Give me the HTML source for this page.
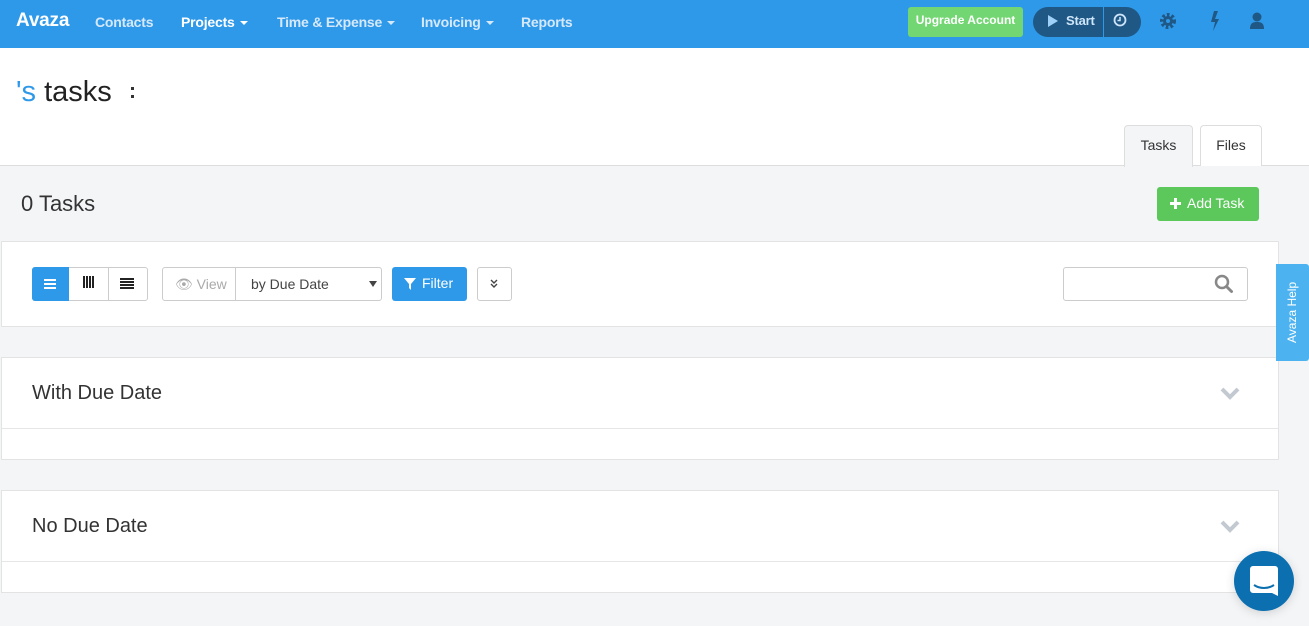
<!DOCTYPE html>
<html><head><meta charset="utf-8"><style>
*{box-sizing:border-box;margin:0;padding:0}
body{width:1309px;height:626px;overflow:hidden;background:#f4f5f7;font-family:"Liberation Sans",Arial,sans-serif;position:relative;color:#333}
.nav{position:absolute;left:0;top:0;width:1309px;height:48px;background:#2f99e9}
.nav span{position:absolute;top:14px;font-size:14px;font-weight:bold;color:#d6e9fb;letter-spacing:-0.2px}
.car{display:inline-block;border-left:4px solid transparent;border-right:4px solid transparent;border-top:4px solid currentColor;vertical-align:middle;margin-left:5px}
.white{position:absolute;left:0;top:48px;width:1309px;height:118px;background:#fff;border-bottom:1px solid #ddd}
.abs{position:absolute}
.panel{position:absolute;left:1px;width:1278px;background:#fff;border:1px solid #e3e3e3}
.btn{position:absolute;border:1px solid #ccc;border-radius:3px;background:#fff}
</style></head><body>
<div class="nav">
<span style="left:16px;top:10px;font-size:19px;color:#fff">Avaza</span>
<span style="left:95px">Contacts</span>
<span style="left:181px;color:#fff">Projects<i class="car"></i></span>
<span style="left:277px">Time &amp; Expense<i class="car"></i></span>
<span style="left:421px">Invoicing<i class="car"></i></span>
<span style="left:521px">Reports</span>
<div class="abs" style="left:908px;top:7px;width:115px;height:30px;background:#72d672;border-radius:3px;color:#fff;font-size:12px;font-weight:bold;text-align:center;line-height:26px">Upgrade Account</div>
<div class="abs" style="left:1033px;top:7px;width:108px;height:30px;background:#1f5785;border-radius:15px"></div>
<div class="abs" style="left:1103px;top:7px;width:1px;height:30px;background:#2f99e9"></div>
<div class="abs" style="left:1048px;top:15px;width:0;height:0;border-left:10px solid #9fd0f7;border-top:6px solid transparent;border-bottom:6px solid transparent"></div>
<span style="left:1066px;top:13px;font-size:13px;color:#cfe6fa">Start</span>
<svg class="abs" style="left:1113px;top:13px" width="14" height="14" viewBox="0 0 14 14"><circle cx="7" cy="7" r="5.5" fill="none" stroke="#cfe6fa" stroke-width="1.8"/><path d="M7 4v3.5h-2.5" fill="none" stroke="#cfe6fa" stroke-width="1.5"/></svg>
<svg class="abs" style="left:1159px;top:12px" width="18" height="18" viewBox="0 0 18 18"><circle cx="9" cy="9" r="6" fill="none" stroke="#1f5785" stroke-width="4" stroke-dasharray="2.5 2"/><circle cx="9" cy="9" r="5" fill="#1f5785"/><circle cx="9" cy="9" r="2" fill="#2f99e9"/></svg>
<svg class="abs" style="left:1208px;top:10px" width="14" height="22" viewBox="0 0 14 22"><path d="M6 1h4L7 9h4L5 21l2-9H3z" fill="#1f5785"/></svg>
<svg class="abs" style="left:1249px;top:12px" width="16" height="18" viewBox="0 0 16 18"><circle cx="8" cy="5" r="4.5" fill="#1f5785"/><path d="M1 17c0-6 3-7 7-7s7 1 7 7z" fill="#1f5785"/></svg>
</div>
<div class="white"></div>
<div class="abs" style="left:16px;top:76px;font-size:29px;color:#222"><span style="color:#2f99e9">'s</span> tasks</div>
<div class="abs" style="left:131px;top:87px;width:3px;height:11px;border-left:3px dotted #333"></div>
<div class="abs" style="left:1124px;top:125px;width:69px;height:42px;background:#f4f5f7;border:1px solid #ddd;border-bottom:none;border-radius:4px 4px 0 0;font-size:14px;text-align:center;line-height:38px">Tasks</div>
<div class="abs" style="left:1200px;top:125px;width:62px;height:41px;background:#fff;border:1px solid #ddd;border-bottom:none;border-radius:4px 4px 0 0;font-size:14px;text-align:center;line-height:38px">Files</div>
<div class="abs" style="left:21px;top:191px;font-size:22px;color:#333">0 Tasks</div>
<div class="abs" style="left:1157px;top:187px;width:102px;height:34px;background:#5cc85c;border-radius:3px;color:#fff;font-size:14px;line-height:33px;padding-left:30px">Add Task</div>
<div class="abs" style="left:1170px;top:202px;width:11px;height:3px;background:#fff"></div><div class="abs" style="left:1174px;top:198px;width:3px;height:11px;background:#fff"></div>
<div class="panel" style="top:241px;height:86px"></div>
<div class="btn" style="left:32px;top:267px;width:116px;height:34px"></div>
<div class="abs" style="left:32px;top:267px;width:37px;height:34px;background:#2f99e9;border-radius:3px 0 0 3px"></div>
<div class="abs" style="left:44px;top:279px;width:12px;height:2px;background:#fff;box-shadow:0 4px #fff,0 8px #fff"></div>
<div class="abs" style="left:108px;top:268px;width:1px;height:32px;background:#ccc"></div>
<div class="abs" style="left:83px;top:276px;width:12px;height:12px;background:repeating-linear-gradient(90deg,#222 0 2px,transparent 2px 3px)"></div>
<div class="abs" style="left:120px;top:278px;width:14px;height:11px;background:repeating-linear-gradient(#222 0 2px,#fff 2px 3px)"></div>
<div class="btn" style="left:162px;top:267px;width:220px;height:34px"></div>
<div class="abs" style="left:235px;top:268px;width:1px;height:32px;background:#ccc"></div>
<div class="abs" style="left:175px;top:276px;font-size:14px;color:#aaa">👁 View</div>
<div class="abs" style="left:251px;top:276px;font-size:14px;color:#444">by Due Date</div>
<div class="abs" style="left:369px;top:281px;border-left:4px solid transparent;border-right:4px solid transparent;border-top:6px solid #444"></div>
<div class="abs" style="left:392px;top:267px;width:75px;height:34px;background:#2f99e9;border-radius:3px;color:#fff;font-size:14px;line-height:33px;padding-left:30px">Filter</div>
<svg class="abs" style="left:404px;top:278px" width="12" height="12" viewBox="0 0 12 12"><path d="M0 0h12L7 6v6L5 10V6z" fill="#fff"/></svg>
<div class="btn" style="left:477px;top:267px;width:35px;height:34px"></div>
<svg class="abs" style="left:489px;top:279px" width="10" height="10" viewBox="0 0 10 10"><path d="M2 1l3 3 3-3M2 5l3 3 3-3" fill="none" stroke="#444" stroke-width="1.4"/></svg>
<div class="btn" style="left:1063px;top:267px;width:185px;height:34px"></div>
<svg class="abs" style="left:1214px;top:274px" width="20" height="20" viewBox="0 0 20 20"><circle cx="8" cy="8" r="6" fill="none" stroke="#888" stroke-width="2.5"/><path d="M12.5 12.5l5 5" stroke="#888" stroke-width="3" stroke-linecap="round"/></svg>
<div class="panel" style="top:357px;height:103px"><div style="position:absolute;left:0;right:0;top:70px;border-top:1px solid #e6e6e6"></div></div>
<div class="abs" style="left:32px;top:382px;font-size:20px;color:#333">With Due Date</div>
<div class="panel" style="top:490px;height:103px"><div style="position:absolute;left:0;right:0;top:70px;border-top:1px solid #e6e6e6"></div></div>
<div class="abs" style="left:32px;top:515px;font-size:20px;color:#333">No Due Date</div>
<svg class="abs" style="left:1219px;top:386px" width="22" height="14" viewBox="0 0 22 14"><path d="M3 3l8 8 8-8" fill="none" stroke="#c3c9d0" stroke-width="4"/></svg>
<svg class="abs" style="left:1219px;top:519px" width="22" height="14" viewBox="0 0 22 14"><path d="M3 3l8 8 8-8" fill="none" stroke="#c3c9d0" stroke-width="4"/></svg>
<div class="abs" style="left:1276px;top:264px;width:33px;height:97px;background:#4db3f0;border-radius:3px 0 0 3px;writing-mode:vertical-rl;transform:rotate(180deg);color:#fff;font-size:12px;text-align:center;line-height:33px;white-space:nowrap">Avaza Help</div>
<div class="abs" style="left:1234px;top:551px;width:60px;height:60px;border-radius:50%;background:#0b6fb0;box-shadow:0 2px 10px rgba(0,0,0,.15)"></div>
<svg class="abs" style="left:1250px;top:566px" width="30" height="32" viewBox="0 0 30 32"><path d="M3 0h22a3 3 0 0 1 3 3v27l-6-3H3a3 3 0 0 1-3-3V3a3 3 0 0 1 3-3z" fill="#fff"/><path d="M4 19c6 4 14 4 20 0" fill="none" stroke="#0b6fb0" stroke-width="2"/></svg>
</body></html>
